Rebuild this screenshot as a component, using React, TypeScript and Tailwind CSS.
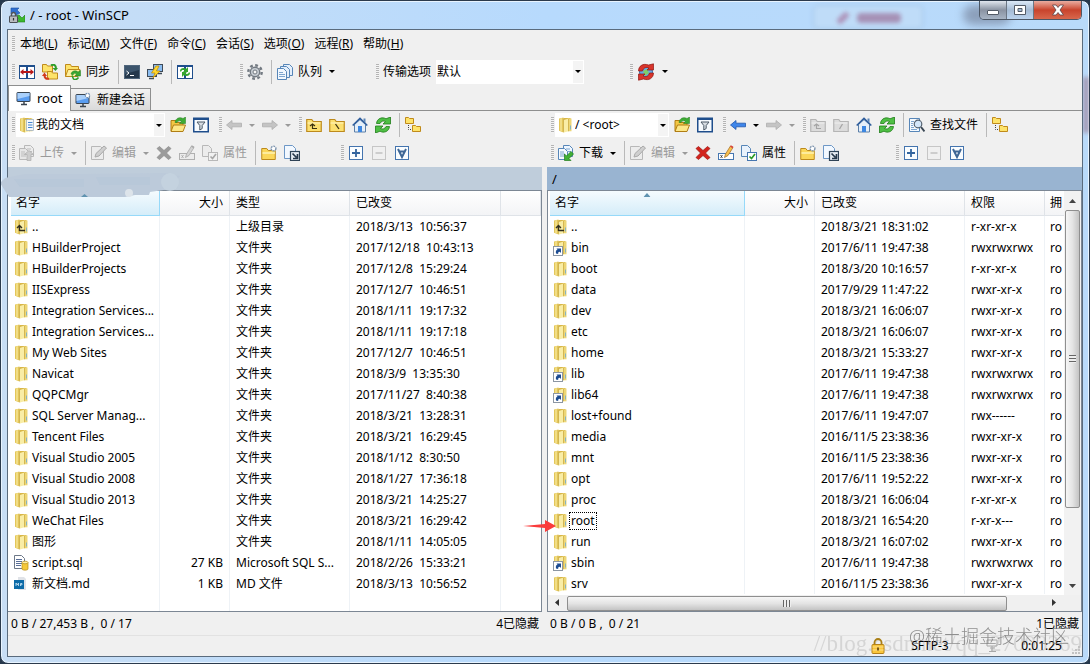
import type { ReactNode } from 'react';
import clsx from 'clsx';

type FileRow = { name: string; size?: string; type: string; date: string; icon?: string };
type RemoteRow = { name: string; date: string; perms: string; icon?: string; focused?: boolean };

const menus = [
  ['本地', 'L'],
  ['标记', 'M'],
  ['文件', 'F'],
  ['命令', 'C'],
  ['会话', 'S'],
  ['选项', 'O'],
  ['远程', 'R'],
  ['帮助', 'H'],
];

const localFiles: FileRow[] = [
  { name: '..', type: '上级目录', date: '2018/3/13  10:56:37', icon: 'up' },
  { name: 'HBuilderProject', type: '文件夹', date: '2017/12/18  10:43:13' },
  { name: 'HBuilderProjects', type: '文件夹', date: '2017/12/8  15:29:24' },
  { name: 'IISExpress', type: '文件夹', date: '2017/12/7  10:46:51' },
  { name: 'Integration Services...', type: '文件夹', date: '2018/1/11  19:17:32' },
  { name: 'Integration Services...', type: '文件夹', date: '2018/1/11  19:17:18' },
  { name: 'My Web Sites', type: '文件夹', date: '2017/12/7  10:46:51' },
  { name: 'Navicat', type: '文件夹', date: '2018/3/9  13:35:30' },
  { name: 'QQPCMgr', type: '文件夹', date: '2017/11/27  8:40:38' },
  { name: 'SQL Server Manag...', type: '文件夹', date: '2018/3/21  13:28:31' },
  { name: 'Tencent Files', type: '文件夹', date: '2018/3/21  16:29:45' },
  { name: 'Visual Studio 2005', type: '文件夹', date: '2018/1/12  8:30:50' },
  { name: 'Visual Studio 2008', type: '文件夹', date: '2018/1/27  17:36:18' },
  { name: 'Visual Studio 2013', type: '文件夹', date: '2018/3/21  14:25:27' },
  { name: 'WeChat Files', type: '文件夹', date: '2018/3/21  16:29:42' },
  { name: '图形', type: '文件夹', date: '2018/1/11  14:05:05' },
  { name: 'script.sql', size: '27 KB', type: 'Microsoft SQL S...', date: '2018/2/26  15:33:21', icon: 'sql' },
  { name: '新文档.md', size: '1 KB', type: 'MD 文件', date: '2018/3/13  10:56:52', icon: 'md' },
];

const remoteFiles: RemoteRow[] = [
  { name: '..', date: '2018/3/21 18:31:02', perms: 'r-xr-xr-x', icon: 'up' },
  { name: 'bin', date: '2017/6/11 19:47:38', perms: 'rwxrwxrwx', icon: 'link' },
  { name: 'boot', date: '2018/3/20 10:16:57', perms: 'r-xr-xr-x' },
  { name: 'data', date: '2017/9/29 11:47:22', perms: 'rwxr-xr-x' },
  { name: 'dev', date: '2018/3/21 16:06:07', perms: 'rwxr-xr-x' },
  { name: 'etc', date: '2018/3/21 16:06:07', perms: 'rwxr-xr-x' },
  { name: 'home', date: '2018/3/21 15:33:27', perms: 'rwxr-xr-x' },
  { name: 'lib', date: '2017/6/11 19:47:38', perms: 'rwxrwxrwx', icon: 'link' },
  { name: 'lib64', date: '2017/6/11 19:47:38', perms: 'rwxrwxrwx', icon: 'link' },
  { name: 'lost+found', date: '2017/6/11 19:47:07', perms: 'rwx------' },
  { name: 'media', date: '2016/11/5 23:38:36', perms: 'rwxr-xr-x' },
  { name: 'mnt', date: '2016/11/5 23:38:36', perms: 'rwxr-xr-x' },
  { name: 'opt', date: '2017/6/11 19:52:22', perms: 'rwxr-xr-x' },
  { name: 'proc', date: '2018/3/21 16:06:04', perms: 'r-xr-xr-x' },
  { name: 'root', date: '2018/3/21 16:54:20', perms: 'r-xr-x---', focused: true },
  { name: 'run', date: '2018/3/21 16:07:02', perms: 'rwxr-xr-x' },
  { name: 'sbin', date: '2017/6/11 19:47:38', perms: 'rwxrwxrwx', icon: 'link' },
  { name: 'srv', date: '2016/11/5 23:38:36', perms: 'rwxr-xr-x' },
];

function Svg({ children }: { children: ReactNode }) {
  return (
    <svg width="16" height="16" viewBox="0 0 16 16" fill="none" className="block shrink-0" aria-hidden="true">
      {children}
    </svg>
  );
}

/* ---------- icons ---------- */

const MiniFolder = ({ x, y }: { x: number; y: number }) => (
  <path
    transform={`translate(${x} ${y})`}
    d="M.5 6.5v-6h3l1 1h4v5z"
    fill="#fde36a"
    stroke="#c08a1a"
  />
);

const LogoIcon = () => (
  <Svg>
    <path d="M2 1h8L8 3l3 3-4 2-2-3-3 2z" fill="#2f6fd0" stroke="#1c4f9e" strokeWidth=".6" />
    <path d="M16 15H8l2-2-3-4 3-1 3 3 3-3z" fill="#3cb82e" stroke="#1f7d17" strokeWidth=".6" />
    <path d="M2.500 9V7.500a2 2 0 0 1 4 0V9" stroke="#555" strokeWidth="1.400" />
    <rect x=".5" y="9" width="8" height="6.500" rx=".5" fill="#b9bcc0" stroke="#4b4f55" />
    <path d="M4.500 11v2.500" stroke="#333" strokeWidth="1.200" />
  </Svg>
);

const CompareIcon = () => (
  <Svg>
    <rect x=".5" y="1.500" width="15" height="13" fill="#fff" stroke="#1f4e8c" />
    <path d="M0 2h16M8 2v12" stroke="#1f4e8c" strokeWidth="2" />
    <path d="M1 8l3.500-3v2h7V5L15 8l-3.500 3V9h-7v2z" fill="#b81818" />
  </Svg>
);

const SyncFoldersIcon = () => (
  <Svg>
    <path d="M.5 8V.5h4l1 1.500h5V8z" fill="#fde36a" stroke="#c08a1a" />
    <path d="M5.500 15V7.500h4l1 1.500h5v6z" fill="#fde36a" stroke="#c08a1a" />
    <path d="M9 1.500c3-2 5 0 5 3" stroke="#2f9e2a" strokeWidth="2" />
    <path d="M10.500 4H16l-2.500 3z" fill="#2f9e2a" />
    <path d="M7 14.500c-3 1-4.500-1-4.500-3" stroke="#d23a1c" strokeWidth="2" />
    <path d="M0 12h5L2.500 8.500z" fill="#d23a1c" />
  </Svg>
);

const SyncIcon = () => (
  <Svg>
    <path d="M.5 12.500v-12h5l1 2h7v4" fill="#fde36a" stroke="#c08a1a" />
    <path d="M.5 12.500L3 5.500h12l-2 7z" fill="#fff0a0" stroke="#c08a1a" />
    <path d="M6 10c1-3.500 5-4 7-2l2.500-1.500V12H10l1.500-2C10.500 9 8.500 9 8 11z" fill="#3aa832" stroke="#1e7a1a" strokeWidth=".5" />
    <path d="M7 11.500l1.500 3.500C10 16 12 15.500 13.500 13.500" stroke="#2f9e2a" strokeWidth="1.500" />
  </Svg>
);

const ConsoleIcon = () => (
  <Svg>
    <rect x=".5" y="1.500" width="15" height="13" fill="#25384c" stroke="#50667c" />
    <path d="M1 2h14v4L1 10z" fill="#3c546c" />
    <path d="M2.500 7l2.500 2-2.500 2M6 11.500h4" stroke="#fff" />
  </Svg>
);

const PuttyIcon = () => (
  <Svg>
    <rect x="6.500" y=".5" width="9" height="7" fill="#8cbdf0" stroke="#3f4b58" />
    <path d="M10 9.500h5" stroke="#3f4b58" strokeWidth="1.500" />
    <rect x=".5" y="5.500" width="9" height="7" fill="#8cbdf0" stroke="#3f4b58" />
    <path d="M2 14.500h5" stroke="#3f4b58" strokeWidth="1.500" />
    <path d="M9 2L4.500 9H8l-2 5 7-7H9.500L12 2z" fill="#ffd72e" stroke="#c28a00" strokeWidth=".7" />
  </Svg>
);

const RefreshPanelsIcon = () => (
  <Svg>
    <rect x=".5" y="1.500" width="15" height="13" fill="#fff" stroke="#1f4e8c" />
    <path d="M0 2h16M8 2v12" stroke="#1f4e8c" strokeWidth="2" />
    <path d="M3 7c0-3 4-4 6-2l2-2v5H6l1.500-1.500C6 5.500 4.500 6 4 8z" fill="#35a62e" />
    <path d="M13 9c0 3-4 4-6 2l-2 2V8h5L8.500 9.500c1.500 1 3 .5 3.500-1.500z" fill="#35a62e" />
  </Svg>
);

const GearIcon = () => (
  <Svg>
    <circle cx="8" cy="8" r="6.700" stroke="#737a82" strokeWidth="2.400" strokeDasharray="2.800 2.460" />
    <circle cx="8" cy="8" r="4.700" fill="#c6ccd2" stroke="#737a82" strokeWidth="1.400" />
    <circle cx="8" cy="8" r="2" fill="#f4f4f4" stroke="#737a82" />
  </Svg>
);

const QueueIcon = () => (
  <Svg>
    <path d="M6.500.5h6l3 3v8h-9z" fill="#e4effb" stroke="#5786b8" />
    <path d="M3.500 2.500h6l3 3v8h-9z" fill="#e4effb" stroke="#5786b8" />
    <path d="M.5 4.500h6l3 3v8h-9z" fill="#f2f8ff" stroke="#5786b8" />
    <path d="M2 8.500h4M2 10.500h6M2 12.500h6" stroke="#7fa6cf" />
  </Svg>
);

const GlobeSyncIcon = () => (
  <svg width="18" height="18" viewBox="0 0 18 18" aria-hidden="true">
    <circle cx="9" cy="9" r="6.500" fill="#67a9e6" stroke="#3c71b0" />
    <path d="M6 8l4-2 2 4-4 3z" fill="#7ed06a" />
    <path d="M1.500 8C1.500 3 6 0 11.500 2L16.500.8V7H10l2-2C9.500 3.800 6.500 4.500 5.500 8z" fill="#d8352c" stroke="#8e1712" strokeWidth=".7" />
    <path d="M16.500 10c0 5-4.500 8-10 6l-5 1.200V11H8l-2 2c2.500 1.200 5.500.5 6.500-3z" fill="#d8352c" stroke="#8e1712" strokeWidth=".7" />
  </svg>
);

const MonitorIcon = ({ fresh }: { fresh?: boolean }) => (
  <Svg>
    <rect x="1" y="2.500" width="13" height="9" rx=".5" fill="#5a9df0" stroke="#3a4550" />
    <path d="M1.500 3h12v3l-12 3z" fill="#a9d0fb" />
    <path d="M5 14.500h6M8 12v2" stroke="#3a4550" strokeWidth="1.500" />
    {fresh && <circle cx="12.500" cy="3.500" r="2.200" fill="#fff" stroke="#7290b4" strokeWidth="1.200" strokeDasharray="1.700 .8" />}
  </Svg>
);

const FolderIcon = ({ kind }: { kind?: string }) => (
  <Svg>
    <path d="M1 1.500L5.500.5v15L1 13.800z" fill="#e3c659" />
    <path d="M2 1.500l2-.5v13.500l-2-.7z" fill="#f1dd86" />
    <path d="M5.500 1h7v13h-7z" fill="#d8b648" />
    <path d="M6 3l4.500-1.500v12.800L6 15.500z" fill="#f9eda6" />
    <path d="M10 1.500h3.500v12.800H10z" fill="#edd676" />
    <path d="M10.500 2v12.200M5.500 1.500v13.800" stroke="#cdae48" strokeWidth=".8" />
    <path d="M12.500 8.500v4" stroke="#86b4c2" />
    {kind === 'docs' && (
      <>
        <rect x="7.500" y="2.500" width="7" height="11" fill="#f4f8fc" stroke="#9ab" strokeWidth=".7" />
        <path d="M9 5.500h4.500M9 8h4.500M9 10.500h4.500" stroke="#4686cf" strokeWidth="1.200" />
      </>
    )}
    {kind === 'up' && <path d="M5.500 12V6.500M3 9l2.500-2.500L8 9M5.500 11.500H11" stroke="#33301f" strokeWidth="1.400" />}
    {kind === 'link' && (
      <>
        <rect x=".5" y="6.500" width="9" height="9" fill="#fff" stroke="#8c96a3" />
        <path d="M3 13.500c-.5-2 0-3.500 1.500-4L3.500 8.500H8V13L6.800 11.800C5.500 12 5 12.500 5.200 14z" fill="#1d4c92" />
      </>
    )}
  </Svg>
);

const SqlIcon = () => (
  <Svg>
    <path d="M.5.500h7l3 3v10H.5z" fill="#fff" stroke="#6d7888" />
    <path d="M2 4.500h6M2 6.500h6M2 8.500h6M2 10.500h5" stroke="#5a6f98" />
    <path d="M8 7.500V14c0 1.500 6 1.500 6 0V7.500z" fill="#f5c83a" stroke="#b88d15" strokeWidth=".7" />
    <ellipse cx="11" cy="7.500" rx="3" ry="1.300" fill="#fff0a8" stroke="#b88d15" strokeWidth=".7" />
  </Svg>
);

const MdIcon = () => (
  <Svg>
    <path d="M4 1h6l2 2v11H4z" fill="#e0e3e8" />
    <rect x="0" y="4" width="10" height="9" fill="#0d6ba8" />
    <path d="M2 10V7l1.300 2L4.500 7v3M6.500 10V7.500H8v1.300H6.500" stroke="#cfe8f8" strokeWidth=".8" />
  </Svg>
);

const OpenFolderIcon = () => (
  <Svg>
    <path d="M1 14V3.500h4.500l1 2H13V8" fill="#f3c744" stroke="#b07d14" />
    <path d="M1 14.500L3.500 8h12L13 14.500z" fill="#fde788" stroke="#b07d14" />
    <path d="M5 5.500C5.500 1 10-.5 13 1.500L15.500 0v6.500H9.500l2-2C10 3.500 8 3.500 7 5.500z" fill="#3eab35" stroke="#237a1d" strokeWidth=".5" />
  </Svg>
);

const FilterIcon = () => (
  <Svg>
    <rect x=".75" y="1.250" width="14.500" height="13.500" fill="#f6fafe" stroke="#1f4e8c" strokeWidth="1.500" />
    <path d="M0 2h16" stroke="#1f4e8c" strokeWidth="2" />
    <path d="M4 5h8L9.200 8.500v3L6.800 13V8.500z" fill="#d7dde3" stroke="#4c5a68" />
  </Svg>
);

const ArrowIcon = ({ right, on }: { right?: boolean; on?: boolean }) => (
  <Svg>
    <path
      d={right ? 'M15.500 8L10 3.500v2.700H.5v3.600H10v2.700z' : 'M.5 8L6 3.500v2.700h9.500v3.600H6v2.700z'}
      fill={on ? '#3f86ea' : '#c4c4c4'}
      stroke={on ? '#1f55ac' : '#adadad'}
      strokeWidth=".8"
    />
  </Svg>
);

const NavFolderIcon = ({ kind, off }: { kind: 'up' | 'root' | 'slash'; off?: boolean }) => (
  <Svg>
    <path
      d="M.75 14.500v-12h5l1.500 2h8v10z"
      fill={off ? '#dcdcdc' : '#fce070'}
      stroke={off ? '#b5b5b5' : '#bd8a1c'}
      strokeWidth="1.200"
    />
    <path d="M1.500 6h13" stroke={off ? '#efefef' : '#fff6c2'} />
    {kind === 'up' && <path d="M6.500 11.500V7M4 9l2.500-2L9 9M6 11.500h5" stroke={off ? '#a5a5a5' : '#3a3210'} strokeWidth="1.200" />}
    {kind === 'root' && <path d="M6.500 7l3.500 5" stroke="#3a3210" strokeWidth="1.300" />}
    {kind === 'slash' && <path d="M9.500 7l-3 5" stroke="#a5a5a5" strokeWidth="1.300" />}
  </Svg>
);

const HomeIcon = () => (
  <Svg>
    <path d="M2.500 7.500V15h11V7.500L8 2.500z" fill="#e5eff9" stroke="#5b7fa8" />
    <path d="M.7 8.500L8 1.500l7.300 7" stroke="#315f9d" strokeWidth="1.700" />
    <path d="M11.500 1.500h2V6l-2-2z" fill="#5b84b5" />
    <rect x="6" y="9" width="4" height="6" fill="#3c86e0" />
  </Svg>
);

const RefreshIcon = () => (
  <Svg>
    <path d="M1.500 6.500C2 1.500 7-.5 11 1.800L15.500 0v7H8l2.500-2.500C8.500 3.500 6 4 5 6.500z" fill="#4fbf45" stroke="#217d1b" strokeWidth=".8" />
    <path d="M14.500 9.500c-.5 5-5.500 7-9.500 4.700L.5 16V9H8l-2.500 2.500c2 1 4.500.5 5.500-2z" fill="#4fbf45" stroke="#217d1b" strokeWidth=".8" />
  </Svg>
);

const TreeIcon = () => (
  <Svg>
    <MiniFolder x={0} y={0} />
    <MiniFolder x={7} y={8} />
    <path d="M3.500 8v4.500H7" stroke="#444" strokeDasharray="1 1" />
  </Svg>
);

const TransferIcon = ({ off }: { off?: boolean }) => (
  <Svg>
    <path d="M5.500.5h6l3 3v8h-9z" fill={off ? '#ececec' : '#eef6ff'} stroke={off ? '#b8b8b8' : '#5786b8'} />
    <path d="M.5 3.500h6l3 3v8h-9z" fill={off ? '#e6e6e6' : '#f5faff'} stroke={off ? '#b8b8b8' : '#5786b8'} />
    <path d="M2 7h4M2 9h5M2 11h5M8 4h4M10 6.500h3" stroke={off ? '#bdbdbd' : '#7fa6cf'} />
    {off ? (
      <path d="M8 15.500v-6H5.500L10 5.500l4.500 4H12v6z" fill="#cdcdcd" stroke="#adadad" strokeWidth=".7" />
    ) : (
      <path d="M6.500 15.500V9l2 2L13 6.500 15.500 9 11 13.500l2 2z" fill="#41b034" stroke="#217d1b" strokeWidth=".7" />
    )}
  </Svg>
);

const EditIcon = () => (
  <Svg>
    <path d="M.5 1.500h9l3 3v10H.5z" fill="#ececec" stroke="#b8b8b8" />
    <path d="M4 12l1-3.500L13 1l2.500 2L8 11z" fill="#cfcfcf" stroke="#a9a9a9" />
  </Svg>
);

const DeleteIcon = ({ off }: { off?: boolean }) => (
  <Svg>
    <path
      d="M1 3.500L3.500 1.500 8 5.500l4.500-4L15 3.500 10.500 8l4.500 4.500-2.500 2L8 10.500l-4.500 4-2.500-2L5.500 8z"
      fill={off ? '#9b9b9b' : '#d3231c'}
      stroke={off ? '#8b8b8b' : '#9c120e'}
      strokeWidth=".7"
    />
  </Svg>
);

const RenameIcon = ({ off }: { off?: boolean }) => (
  <Svg>
    <rect x=".5" y="8.500" width="15" height="6" fill={off ? '#ececec' : '#fff'} stroke={off ? '#b0b0b0' : '#4676b0'} />
    <path d="M2.500 10l2 3M4.500 10l-2 3" stroke={off ? '#aaa' : '#333'} strokeWidth=".8" />
    <path d="M6.500 12.500l1-3.500 5-8L15 2.500l-5 8z" fill={off ? '#d4d4d4' : '#f9c04e'} stroke={off ? '#aaa' : '#a9762a'} strokeWidth=".8" />
    <path d="M12.500 1L15 2.500" stroke={off ? '#aaa' : '#d8443c'} strokeWidth="1.500" />
  </Svg>
);

const PropsIcon = ({ off }: { off?: boolean }) => (
  <Svg>
    <path d="M.5.500h6l3 3v8h-9z" fill={off ? '#ececec' : '#e9f2fc'} stroke={off ? '#b8b8b8' : '#5786b8'} />
    <rect x="6.500" y="7.500" width="9" height="8" fill={off ? '#f1f1f1' : '#fff'} stroke={off ? '#b8b8b8' : '#4676b0'} />
    <path d="M8.500 11.500l2 2L14 9" stroke={off ? '#a8a8a8' : '#2c9b26'} strokeWidth="1.700" />
  </Svg>
);

const NewFolderIcon = () => (
  <Svg>
    <path d="M.75 14.500V3.500h5l1.500 2h7v9z" fill="#fbd75a" stroke="#bd8a1c" />
    <path d="M1.500 8h12.500" stroke="#fff3b5" strokeWidth="1.500" />
    <circle cx="12.500" cy="3.500" r="2.400" fill="#fff" stroke="#7c93ad" strokeWidth="1.400" strokeDasharray="1.700 .8" />
  </Svg>
);

const NewLinkIcon = () => (
  <Svg>
    <path d="M.5.500h8l3 3v10H.5z" fill="#f2f8ff" stroke="#6d97c6" />
    <rect x="6.500" y="6.500" width="9" height="9" fill="#e7edf3" stroke="#2f4356" strokeWidth="1.200" />
    <path d="M8.500 8.500l4 4M13.500 9v4.500H9" stroke="#26384a" strokeWidth="1.700" />
  </Svg>
);

const SelectIcon = ({ kind }: { kind: 'plus' | 'minus' | 'invert' }) => (
  <Svg>
    <rect
      x="1.500"
      y="1.500"
      width="13"
      height="13"
      fill={kind === 'minus' ? '#f0f0f0' : '#fafdff'}
      stroke={kind === 'minus' ? '#c6c6c6' : '#4474ae'}
    />
    {kind === 'plus' && <path d="M8 4v8M4 8h8" stroke="#33659f" strokeWidth="1.800" />}
    {kind === 'minus' && <path d="M4.500 8h7" stroke="#c2c2c2" strokeWidth="1.500" />}
    {kind === 'invert' && <path d="M4 4l4 8 4-8M5 6.500h6" stroke="#3f6796" strokeWidth="2" />}
  </Svg>
);

const FindIcon = () => (
  <Svg>
    <path d="M.5 1.500h10v13H.5z" fill="#f5faff" stroke="#5786b8" />
    <path d="M2 4.500h3M2 6.500h2M2 8.500h2M2 10.500h3M2 12.500h6" stroke="#7fa6cf" />
    <circle cx="9" cy="7" r="3.800" fill="#d4e7fa" stroke="#53606e" strokeWidth="1.200" />
    <path d="M12 10l3.500 4.500" stroke="#3b4855" strokeWidth="2" />
  </Svg>
);

const LockIcon = () => (
  <svg width="14" height="16" viewBox="0 0 14 16" aria-hidden="true">
    <path d="M3.500 7V4.500a3.500 3.500 0 0 1 7 0V7" fill="none" stroke="#a97f16" strokeWidth="1.800" />
    <rect x="1" y="6.500" width="12" height="9" rx="1" fill="#f9c63c" stroke="#b5821a" />
    <path d="M1.500 9h11M1.500 12h11" stroke="#fde08a" />
    <path d="M7 9.500v3" stroke="#5c3d05" strokeWidth="1.600" />
  </svg>
);

/* ---------- toolbar pieces ---------- */

const Grip = () => (
  <span className="mr-px h-4 w-[3px] shrink-0 bg-[repeating-linear-gradient(180deg,#b4b4b4_0_1px,#f4f4f4_1px_2px)]" />
);

const Sep = () => <span className="mr-[2px] ml-1 h-6 w-px shrink-0 bg-[#b9b9b9]" />;

const Caret = ({ off }: { off?: boolean }) => (
  <svg width="6" height="3" viewBox="0 0 6 3" className="ml-[7px] shrink-0" aria-hidden="true">
    <path d="M0 0h6L3 3z" fill={off ? '#9a9a9a' : '#000'} />
  </svg>
);

function Tool({ icon, text, title, caret, off }: { icon: ReactNode; text?: string; title?: string; caret?: boolean; off?: boolean }) {
  return (
    <button
      type="button"
      title={title}
      aria-label={title ?? text}
      disabled={off}
      className={clsx('flex h-6 shrink-0 items-center pr-1 pl-[3px] whitespace-nowrap', off ? 'text-[#9a9a9a]' : 'text-black')}
    >
      {icon}
      {text && <span className="ml-[5px]">{text}</span>}
      {caret && <Caret off={off} />}
    </button>
  );
}

function Combo({ id, label, value, icon, className }: { id: string; label: string; value: string; icon?: ReactNode; className: string }) {
  return (
    <div className={clsx('relative flex h-6 shrink-0 items-center bg-white', className)}>
      {icon && <span className="pl-[3px]">{icon}</span>}
      <select id={id} aria-label={label} className="h-6 min-w-0 flex-1 appearance-none bg-transparent pr-3 pl-px outline-none">
        <option>{value}</option>
      </select>
      <span className="pointer-events-none absolute top-px right-px bottom-px flex w-[10px] items-center justify-center bg-[#f4f4f4]">
        <svg width="6" height="3" viewBox="0 0 6 3" aria-hidden="true">
          <path d="M0 0h6L3 3z" fill="#000" />
        </svg>
      </span>
    </div>
  );
}

function PaneToolbars({ remote }: { remote?: boolean }) {
  const off = !remote;
  return (
    <div className="h-14 shrink-0 pl-1">
      <div className="flex h-7 items-center">
        <div className={clsx('flex shrink-0 items-center', remote ? 'w-[172px]' : 'w-[207px]')}>
          <Grip />
          <Combo
            id={remote ? 'remote-dir' : 'local-dir'}
            label={remote ? '远程目录' : '本地目录'}
            value={remote ? '/ <root>' : '我的文档'}
            icon={<FolderIcon kind={remote ? undefined : 'docs'} />}
            className={remote ? 'mr-[2px] w-[114px]' : 'mr-[2px] w-[149px]'}
          />
          <Tool icon={<OpenFolderIcon />} title="打开目录" />
          <Tool icon={<FilterIcon />} title="过滤" />
        </div>
        <div className="flex w-20 shrink-0 items-center">
          <Grip />
          <Tool icon={<ArrowIcon on={remote} />} title="后退" caret off={off} />
          <Tool icon={<ArrowIcon right />} title="前进" caret off />
        </div>
        <Grip />
        <Tool icon={<NavFolderIcon kind="up" off={remote} />} title="上级目录" off={remote} />
        <Tool icon={<NavFolderIcon kind={remote ? 'slash' : 'root'} off={remote} />} title="根目录" off={remote} />
        <Tool icon={<HomeIcon />} title="主目录" />
        <Tool icon={<RefreshIcon />} title="刷新" />
        <Sep />
        {remote && (
          <>
            <Tool icon={<FindIcon />} text="查找文件" />
            <Sep />
          </>
        )}
        <Tool icon={<TreeIcon />} title="目录树" />
      </div>
      <div className="flex h-7 items-center">
        <div className={clsx('flex shrink-0 items-center', remote ? 'w-[345px]' : 'w-[329px]')}>
          <Grip />
          <Tool icon={<TransferIcon off={off} />} text={remote ? '下载' : '上传'} caret off={off} />
          <Sep />
          <Tool icon={<EditIcon />} text="编辑" caret off />
          <Tool icon={<DeleteIcon off={off} />} title="删除" off={off} />
          <Tool icon={<RenameIcon off={off} />} title="重命名" off={off} />
          <Tool icon={<PropsIcon off={off} />} text="属性" off={off} />
          <Sep />
          <Tool icon={<NewFolderIcon />} title="新建目录" />
          <Tool icon={<NewLinkIcon />} title="新建链接" />
        </div>
        <Grip />
        <Tool icon={<SelectIcon kind="plus" />} title="选择" />
        <Tool icon={<SelectIcon kind="minus" />} title="取消选择" off />
        <Tool icon={<SelectIcon kind="invert" />} title="反选" />
      </div>
    </div>
  );
}

/* ---------- file lists ---------- */

const headCell = 'h-[25px] overflow-hidden border-r border-b border-[#dfe3e8] bg-linear-to-b from-white to-[#f3f4f6] px-[6px] text-left font-normal';
const bodyCell = 'overflow-hidden border-r border-[#eef2f6] px-[6px] py-0';

const SortedHead = () => (
  <th className="relative h-[25px] border-r border-b border-[#96d9f9] bg-linear-to-b from-[#f5fbfe] to-[#d5edf9] pl-[5px] text-left font-normal">
    名字
    <svg width="7" height="4" viewBox="0 0 7 4" className="absolute top-[2px] left-1/2 -translate-x-1/2" aria-hidden="true">
      <path d="M0 4h7L3.500 0z" fill="#5f93b0" />
    </svg>
  </th>
);

function RowIcon({ kind }: { kind?: string }) {
  if (kind === 'sql') return <SqlIcon />;
  if (kind === 'md') return <MdIcon />;
  return <FolderIcon kind={kind} />;
}

function NameCell({ name, icon, focused }: { name: string; icon?: string; focused?: boolean }) {
  return (
    <td className="border-r border-[#eef2f6] py-0 pl-[3px]">
      <div className="flex h-[21px] items-center gap-px">
        <RowIcon kind={icon} />
        <span className={clsx('px-px', focused && 'outline-1 outline-black outline-dotted')}>{name}</span>
      </div>
    </td>
  );
}

function LocalList() {
  return (
    <div className="min-h-0 flex-1 overflow-hidden border-t border-r border-b border-[#7c8794] bg-white pl-[3px]">
      <table className="h-full w-full table-fixed border-separate border-spacing-0 whitespace-pre">
        <colgroup>
          <col className="w-[149px]" />
          <col className="w-[70px]" />
          <col className="w-[120px]" />
          <col className="w-[151px]" />
          <col />
        </colgroup>
        <thead>
          <tr>
            <SortedHead />
            <th className={clsx(headCell, 'text-right')}>大小</th>
            <th className={headCell}>类型</th>
            <th className={headCell}>已改变</th>
            <th className={headCell} />
          </tr>
        </thead>
        <tbody>
          {localFiles.map((file, idx) => (
            <tr key={idx} className="h-[21px]">
              <NameCell name={file.name} icon={file.icon} />
              <td className={clsx(bodyCell, 'text-right')}>{file.size}</td>
              <td className={bodyCell}>{file.type}</td>
              <td className={bodyCell}>{file.date}</td>
              <td />
            </tr>
          ))}
          <tr>
            <td className={bodyCell} />
            <td className={bodyCell} />
            <td className={bodyCell} />
            <td className={bodyCell} />
            <td />
          </tr>
        </tbody>
      </table>
    </div>
  );
}

function RemoteList() {
  return (
    <div className="flex min-h-0 flex-1 flex-col border border-[#7c8794] bg-[#f0f0f0]">
      <div className="flex min-h-0 flex-1">
        <div className="min-w-0 flex-1 overflow-hidden bg-white pl-[2px]">
          <table className="w-full table-fixed border-separate border-spacing-0 whitespace-nowrap">
            <colgroup>
              <col className="w-[195px]" />
              <col className="w-[70px]" />
              <col className="w-[150px]" />
              <col className="w-20" />
              <col />
            </colgroup>
            <thead>
              <tr>
                <SortedHead />
                <th className={clsx(headCell, 'text-right')}>大小</th>
                <th className={headCell}>已改变</th>
                <th className={headCell}>权限</th>
                <th className="h-[25px] border-b border-[#dfe3e8] bg-linear-to-b from-white to-[#f3f4f6] pl-[5px] text-left font-normal">拥</th>
              </tr>
            </thead>
            <tbody>
              {remoteFiles.map((file) => (
                <tr key={file.name} className="h-[21px]">
                  <NameCell name={file.name} icon={file.icon} focused={file.focused} />
                  <td className={bodyCell} />
                  <td className={bodyCell}>{file.date}</td>
                  <td className={bodyCell}>{file.perms}</td>
                  <td className="overflow-hidden py-0 pl-[5px]">ro</td>
                </tr>
              ))}
            </tbody>
          </table>
        </div>
        <div className="flex w-[17px] shrink-0 flex-col items-center bg-[#f2f2f2]">
          <svg width="16" height="19" viewBox="0 0 16 19" aria-hidden="true">
            <path d="M4 12h7L7.500 8z" fill="#444" />
          </svg>
          <div className="flex h-[298px] w-[15px] items-center justify-center rounded-xs border border-[#8f8f8f] bg-linear-to-r from-[#f6f6f6] via-[#e4e4e4] to-[#c4c4c4]">
            <span className="h-2 w-[7px] bg-[repeating-linear-gradient(180deg,#666_0_1px,#eee_1px_3px)]" />
          </div>
          <svg width="16" height="18" viewBox="0 0 16 18" className="mt-auto" aria-hidden="true">
            <path d="M4 7h7L7.500 11z" fill="#444" />
          </svg>
        </div>
      </div>
      <div className="flex h-4 shrink-0 items-center pr-[17px]">
        <svg width="19" height="16" viewBox="0 0 19 16" className="shrink-0" aria-hidden="true">
          <path d="M11 4v7L7 7.500z" fill="#333" />
        </svg>
        <div className="flex min-w-0 flex-1">
          <div className="flex h-[15px] w-[92%] items-center justify-center rounded-xs border border-[#8f8f8f] bg-linear-to-b from-[#f6f6f6] via-[#e4e4e4] to-[#c4c4c4]">
            <span className="h-[7px] w-2 bg-[repeating-linear-gradient(90deg,#666_0_1px,#eee_1px_3px)]" />
          </div>
        </div>
        <svg width="19" height="16" viewBox="0 0 19 16" className="shrink-0" aria-hidden="true">
          <path d="M7 4v7l4-3.500z" fill="#333" />
        </svg>
      </div>
    </div>
  );
}

/* ---------- window ---------- */

function TitleBar() {
  return (
    <header className="relative flex h-7 shrink-0 items-start">
      <div className="absolute top-1 left-[812px] h-6 w-[110px] rounded-sm border border-[#9dbfe2] bg-[#bfdcf8] blur-[2px]" />
      <div className="absolute top-[12px] left-[856px] h-[10px] w-[44px] rounded-sm bg-[#a07fa6] opacity-80 blur-[2px]" />
      <div className="absolute top-[10px] left-[839px] h-[14px] w-[6px] rotate-45 rounded-full bg-[#a87fa8] opacity-80 blur-[2px]" />
      <div className="absolute top-[4px] left-[962px] h-5 w-12 rounded-full bg-[#6f7a92] opacity-60 blur-[4px]" />
      <div className="relative flex h-7 flex-1 items-center gap-[5px] pl-2">
        <LogoIcon />
        <h1 className="text-[13px] leading-4">/ - root - WinSCP</h1>
      </div>
      <div className="relative mr-[7px] flex h-[19px] overflow-hidden rounded-b-[5px] border border-t-0 border-[#4c5765]">
        <button type="button" aria-label="最小化" className="flex w-[27px] items-center justify-center border-r border-[#6b7684] bg-linear-to-b from-[#e0e6ee] via-[#8a93a2] to-[#a7b4c4]">
          <svg width="12" height="12" viewBox="0 0 12 12" aria-hidden="true">
            <rect x=".5" y="6.500" width="11" height="4" rx=".5" fill="#fff" stroke="#535b66" />
          </svg>
        </button>
        <button type="button" aria-label="最大化" className="flex w-[27px] items-center justify-center border-r border-[#6b7684] bg-linear-to-b from-[#dce9f7] via-[#a5bbd4] to-[#bcd4ee]">
          <svg width="12" height="12" viewBox="0 0 12 12" aria-hidden="true">
            <path d="M.5 1.500h11v9H.5zM4 4.500h4v3H4z" fill="#fff" fillRule="evenodd" stroke="#535b66" />
          </svg>
        </button>
        <button type="button" aria-label="关闭" className="flex w-[47px] items-center justify-center bg-linear-to-b from-[#e8aca0] via-[#c8432c] to-[#d8674c]">
          <svg width="12" height="12" viewBox="0 0 12 12" aria-hidden="true">
            <path d="M.5 1h3.500L6 3.500 8 1h3.500L8 6l3.500 5H8L6 8.500 4 11H.5L4 6z" fill="#fff" stroke="#5a4348" strokeWidth=".8" />
          </svg>
        </button>
      </div>
    </header>
  );
}

export default function App() {
  return (
    <div className="h-screen w-full bg-[#26384c] font-['Noto_Sans','Noto_Sans_CJK_SC',sans-serif] text-[12px] leading-4 text-black select-none">
      <div className="relative flex h-full flex-col overflow-hidden rounded-lg border border-[#2b3a4c] bg-linear-to-r from-[#c8def5] via-[#b7dafd] to-[#b9dafa] px-[6px] pb-[6px] shadow-[inset_0_0_0_1px_#e8f4ff]">
        <div className="absolute top-[76px] right-0 h-14 w-[6px] bg-[#9c7f96] opacity-70 blur-[2px]" />
        <div className="-mx-[6px]">
          <TitleBar />
        </div>

        <main className="relative flex min-h-0 flex-1 flex-col border border-[#5a6b7d] bg-[#f0f0f0]">
          <nav className="flex h-7 shrink-0 items-center pl-1">
            <Grip />
            {menus.map(([name, key]) => (
              <button key={key} type="button" className="px-[5px] whitespace-nowrap first-of-type:pl-1">
                {name}(<u>{key}</u>)
              </button>
            ))}
          </nav>

          <div className="flex h-[27px] shrink-0 items-center pl-1">
            <div className="flex w-[228px] shrink-0 items-center">
              <Grip />
              <Tool icon={<CompareIcon />} title="比较目录" />
              <Tool icon={<SyncFoldersIcon />} title="保持远程目录更新" />
              <Tool icon={<SyncIcon />} text="同步" />
              <Sep />
              <Tool icon={<ConsoleIcon />} title="打开终端" />
              <Tool icon={<PuttyIcon />} title="在 PuTTY 中打开会话" />
              <Sep />
              <Tool icon={<RefreshPanelsIcon />} title="同步浏览" />
            </div>
            <div className="flex w-[136px] shrink-0 items-center">
              <Grip />
              <Tool icon={<GearIcon />} title="选项" />
              <Sep />
              <Tool icon={<QueueIcon />} text="队列" caret />
            </div>
            <div className="flex w-[254px] shrink-0 items-center">
              <Grip />
              <label htmlFor="transfer-preset" className="mr-[5px] ml-[3px]">
                传输选项
              </label>
              <Combo id="transfer-preset" label="传输选项" value="默认" className="w-[148px]" />
            </div>
            <Grip />
            <Tool icon={<GlobeSyncIcon />} title="会话颜色" caret />
          </div>

          <div role="tablist" className="flex h-[26px] shrink-0 items-end border-b border-[#8e8f8f]">
            <button
              type="button"
              role="tab"
              aria-selected="true"
              className="-mb-px flex h-[26px] w-[63px] items-center gap-[5px] border border-b-0 border-[#8e8f8f] bg-white pb-px pl-[7px] text-[13px]"
            >
              <MonitorIcon />
              root
            </button>
            <button
              type="button"
              role="tab"
              aria-selected="false"
              className="flex h-[22px] w-20 items-center gap-[6px] border border-b-0 border-l-0 border-[#8e8f8f] bg-linear-to-b from-[#f2f2f2] to-[#dadada] pl-1 whitespace-nowrap"
            >
              <MonitorIcon fresh />
              新建会话
            </button>
          </div>

          <div className="flex min-h-0 flex-1">
            <section className="relative flex w-[534px] shrink-0 flex-col">
              <PaneToolbars />
              <div className="h-[23px] shrink-0 bg-[#bfcddb]" />
              <LocalList />
              {/* smeared local path */}
              <svg width="200" height="28" viewBox="0 0 200 28" className="pointer-events-none absolute top-[60px] -left-2" aria-hidden="true">
                <path d="M0 12L5 7l20-4h60l80-1 15 3-10 13-20 3-1 3h-14l-10 2H9z" fill="#bccada" />
                <path d="M14 8h70v8H20zM96 6h54v8h-50z" fill="#b3c5d8" opacity=".5" />
                <circle cx="170" cy="11" r="9" fill="#c5d3e0" opacity=".8" />
                <circle cx="129" cy="22" r="4" fill="#dde4ea" />
                <path d="M81 26h7l-3.500-3z" fill="#5f93b0" />
              </svg>
            </section>
            <div className="w-[5px] shrink-0" />
            <section className="relative flex min-w-0 flex-1 flex-col">
              <PaneToolbars remote />
              <div className="flex h-[23px] shrink-0 items-center bg-[#99b4d1] pl-[5px] text-[13px]">/</div>
              <RemoteList />
              <svg width="33" height="12" viewBox="0 0 33 12" className="pointer-events-none absolute top-[409px] -left-6" aria-hidden="true">
                <path d="M0 6l22-2V0l11 6-11 6V8z" fill="#fa3c3c" />
              </svg>
            </section>
          </div>

          <footer className="relative shrink-0">
            <div className="pointer-events-none absolute right-0 bottom-0 font-['Liberation_Serif',serif] text-[23px] leading-6 whitespace-nowrap text-[#c4c4c4] opacity-60">
              //blog.csdn.net/qq_27093269
            </div>
            <div className="relative flex h-6 items-center border-b border-[#e2e2e2] pt-px">
              <div className="flex w-[534px] shrink-0 justify-between pr-[3px] pl-[3px]">
                <span className="whitespace-pre">0 B / 27,453 B ,  0 / 17</span>
                <span>4已隐藏</span>
              </div>
              <div className="flex flex-1 justify-between pr-[3px] pl-2">
                <span className="whitespace-pre">0 B / 0 B ,  0 / 21</span>
                <span>1已隐藏</span>
              </div>
            </div>
            <div className="relative flex h-5 items-center justify-end pr-5">
              <LockIcon />
              <span className="ml-[26px] w-[75px]">SFTP-3</span>
              <svg width="12" height="14" viewBox="0 0 12 14" className="mr-[23px]" aria-hidden="true">
                <path d="M1 1h10v6H1zM4 9h5M6 7v5M3 12.500h7" fill="none" stroke="#a8a8a8" />
              </svg>
              <span>0:01:25</span>
              <svg width="10" height="10" viewBox="0 0 10 10" className="absolute right-px bottom-px" aria-hidden="true">
                <path d="M7 1h2v2H7zM4 4h2v2H4zM7 4h2v2H7zM1 7h2v2H1zM4 7h2v2H4zM7 7h2v2H7z" fill="#c2c2c2" />
              </svg>
            </div>
            <div className="pointer-events-none absolute right-[13px] bottom-[10px] text-[18px] leading-5 font-light whitespace-nowrap text-[#777] opacity-80">
              @稀土掘金技术社区
            </div>
          </footer>
        </main>
      </div>
    </div>
  );
}
